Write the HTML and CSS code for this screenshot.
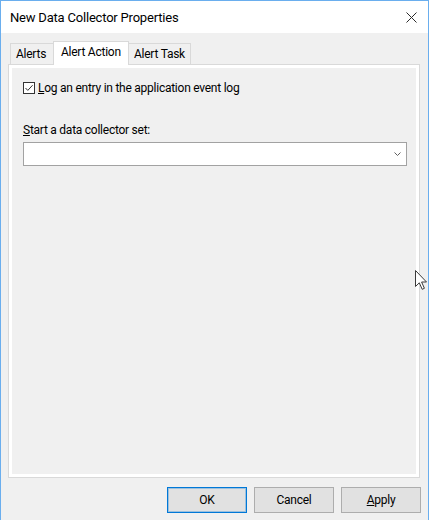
FILE: index.html
```html
<!DOCTYPE html>
<html lang="en">
<head>
    <meta charset="UTF-8">
    <meta name="viewport" content="width=device-width, initial-scale=1.0">
    <title>New Data Collector Properties</title>
    <link rel="stylesheet" href="styles.css">
</head>
<body>
    <div class="window">
        <header class="title-bar">
            <div class="title">New Data Collector Properties</div>
            <button class="close-btn" aria-label="Close">
                <svg width="11" height="11" viewBox="0 0 11 11">
                    <path d="M0.5 0.5 L10.5 10.5 M10.5 0.5 L0.5 10.5" stroke="#2b2b2b" stroke-width="1" fill="none"/>
                </svg>
            </button>
        </header>

        <main class="dialog-body">
            <div class="tabs">
                <div class="tab tab-alerts">Alerts</div>
                <div class="tab tab-action active">Alert Action</div>
                <div class="tab tab-task">Alert Task</div>
            </div>

            <section class="tab-panel">
                <div class="tab-page">
                    <label class="check-row">
                        <span class="checkbox">
                            <svg width="10" height="10" viewBox="0 0 10 10">
                                <path d="M1.5 5 L3.8 7.4 L8.6 2.2" stroke="#333" stroke-width="1" fill="none"/>
                            </svg>
                        </span>
                        <span><u>L</u>og an entry in the application event log</span>
                    </label>

                    <div class="field-label"><u>S</u>tart a data collector set:</div>
                    <div class="combo">
                        <svg width="7" height="4" viewBox="0 0 7 4">
                            <path d="M0.5 0.5 L3.5 3.5 L6.5 0.5" stroke="#606060" stroke-width="1" fill="none"/>
                        </svg>
                    </div>
                </div>
            </section>

            <div class="buttons">
                <button class="btn btn-default">OK</button>
                <button class="btn">Cancel</button>
                <button class="btn"><u>A</u>pply</button>
            </div>
        </main>

        <!-- mouse pointer left in the screenshot -->
        <svg class="cursor" width="13" height="21" viewBox="0 0 13 21">
            <path d="M0.5 0.5 L0.5 16.5 L4.3 12.8 L7.2 19.3 L9.4 18.3 L6.6 12 L11.5 12 Z" fill="#fff" stroke="#3a3a3a" stroke-width="1"/>
        </svg>
    </div>
</body>
</html>
```

FILE: styles.css
```css
:root {
    --win-accent: #6aaeee;
    --face: #f0f0f0;
    --tab-line: #d9d9d9;
    --btn-face: #e1e1e1;
    --btn-line: #adadad;
    --focus-blue: #0078d7;
}

* {
    box-sizing: border-box;
}

html, body {
    margin: 0;
    padding: 0;
}

body {
    background: var(--face);
    font-family: Roboto, "Liberation Sans", sans-serif;
    font-size: 12px;
    letter-spacing: -0.25px;
    color: #000;
}

.window {
    position: relative;
    width: 429px;
    height: 520px;
    border: 1px solid var(--win-accent);
    border-bottom: none;
    background: var(--face);
    display: flex;
    flex-direction: column;
}

.title-bar {
    height: 32px;
    background: #fff;
    display: flex;
    align-items: center;
    justify-content: space-between;
    padding-left: 9px;
}

.title {
    font-size: 13px;
    line-height: 16px;
    padding-top: 1px;
    letter-spacing: -0.2px;
}

.close-btn {
    display: flex;
    padding: 0;
    margin-right: 11px;
    border: 0;
    background: none;
}

.dialog-body {
    flex: 1;
    display: flex;
    flex-direction: column;
    padding: 8px 8px 0 7px;
}

.tabs {
    display: flex;
    align-items: flex-end;
    height: 23px;
    padding-left: 2px;
    position: relative;
    z-index: 1;
}

.tab {
    height: 21px;
    border: 1px solid var(--tab-line);
    border-bottom: none;
    padding-top: 2px;
    line-height: 16px;
    background: var(--face);
    white-space: nowrap;
}

.tab-alerts {
    width: 45px;
    padding-left: 5px;
}

.tab-action {
    width: 76px;
    padding-left: 7px;
}

.tab-task {
    width: 64px;
    padding-left: 6px;
}

.tab.active {
    height: 24px;
    margin: 0 -2px -1px;
    background: #fff;
    position: relative;
    z-index: 2;
}

.tab-panel {
    height: 414px;
    border: 1px solid var(--tab-line);
    background: #fff;
    padding: 3px;
}

.tab-page {
    height: 100%;
    background: var(--face);
    padding: 12px 9px 0 11px;
}

.check-row {
    display: flex;
    align-items: center;
    gap: 3px;
    line-height: 16px;
}

.checkbox {
    width: 12px;
    height: 12px;
    border: 1px solid #333;
    background: #fff;
    display: flex;
    align-items: center;
    justify-content: center;
}

.field-label {
    margin-top: 26px;
    line-height: 16px;
}

.combo {
    margin-top: 4px;
    width: 384px;
    height: 24px;
    border: 1px solid #a2a2a2;
    background: #fff;
    display: flex;
    align-items: center;
    justify-content: flex-end;
    padding-right: 5px;
}

.buttons {
    display: flex;
    justify-content: flex-end;
    gap: 7px;
    margin-top: 9px;
    margin-right: -1px;
}

.btn {
    width: 80px;
    height: 26px;
    padding: 0;
    border: 1px solid var(--btn-line);
    background: var(--btn-face);
    font-family: inherit;
    font-size: 12px;
    letter-spacing: -0.25px;
    color: #000;
}

.btn-default {
    border-color: var(--focus-blue);
    box-shadow: inset 0 0 0 1px rgba(0, 120, 215, 0.3);
}

.cursor {
    position: absolute;
    left: 414px;
    top: 269px;
}
```
